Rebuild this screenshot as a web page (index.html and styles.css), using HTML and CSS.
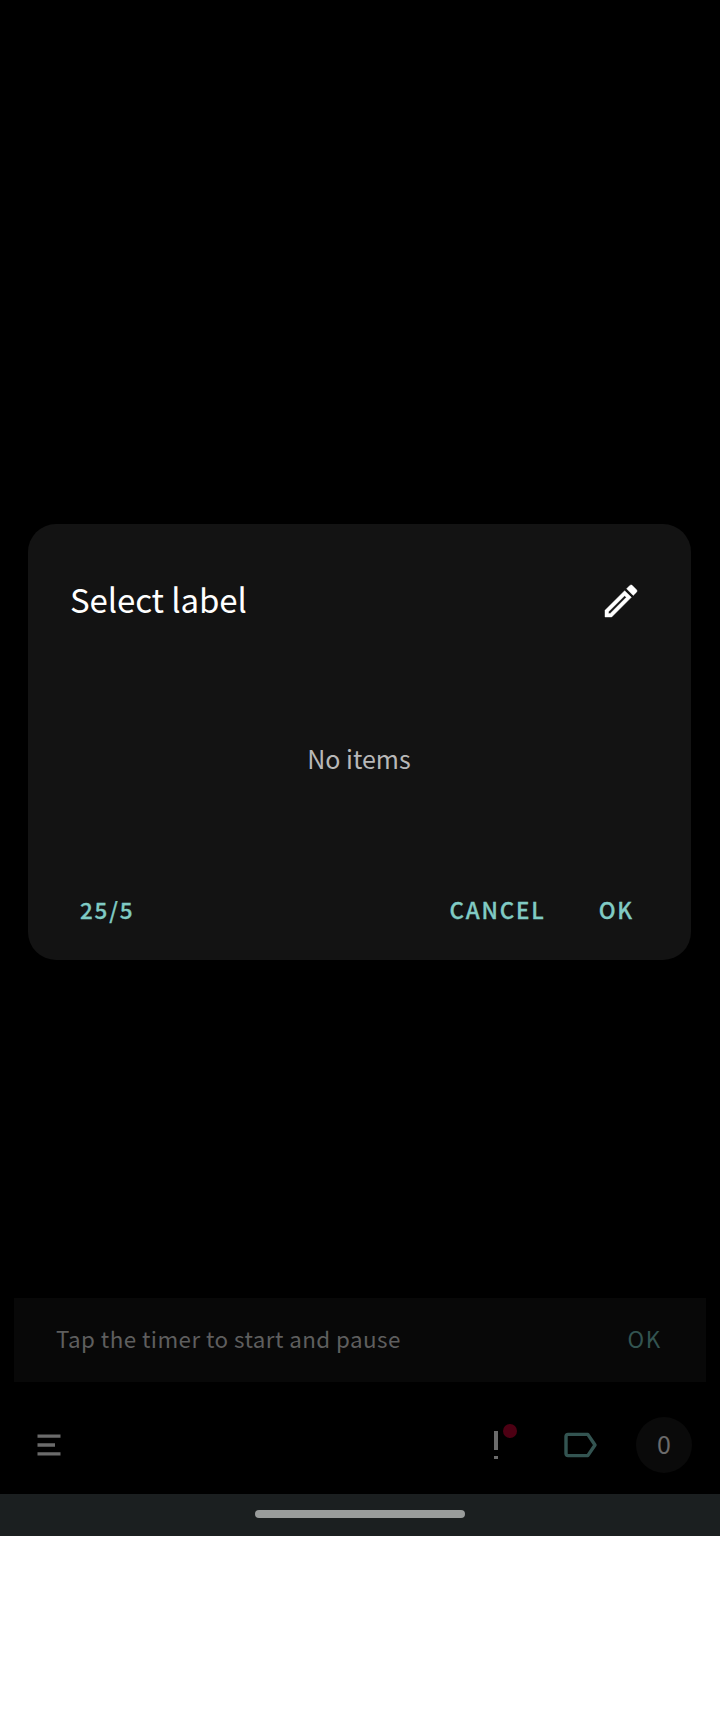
FILE: index.html
```
<!DOCTYPE html>
<html lang="en">
<head>
<meta charset="utf-8">
<title>Select label</title>
<link rel="stylesheet" href="styles.css">
</head>
<body>
<div class="screen">
  <section class="dialog">
    <header class="dialog-head">
      <h1 class="title">Select label</h1>
      <svg class="edit" viewBox="3 3 18 18"><path fill="#fff" stroke="#fff" stroke-width=".25" d="M14.060 9.020l.92.92L5.920 19H5v-.92l9.060-9.060M17.660 3c-.25 0-.51.1-.7.290l-1.830 1.830 3.750 3.750 1.830-1.830c.39-.39.39-1.020 0-1.410l-2.340-2.340c-.2-.2-.45-.29-.71-.29zm-3.600 3.190L3 17.250V21h3.750L17.810 9.940l-3.750-3.750z"/></svg>
    </header>
    <p class="empty">No items</p>
    <footer class="actions">
      <span class="profile">25/5</span>
      <span class="cancel">CANCEL</span>
      <span>OK</span>
    </footer>
  </section>
  <div class="snackbar">
    <span class="message">Tap the timer to start and pause</span>
    <span class="snack-ok">OK</span>
  </div>
  <nav class="toolbar">
    <svg class="menu" viewBox="0 0 24 22"><path fill="#6b6b6b" d="M.5.500H23.500V3.800H.5zM.5 9.200H18V12.800H.5zM.5 18.200H23.500V21.500H.5z"/></svg>
    <svg class="alert" viewBox="0 0 24 36"><path fill="#6b6b6b" d="M1 4h4v19H1zM1 29h4v3H1z"/><circle cx="17" cy="4" r="7" fill="#4d0013"/></svg>
    <svg class="tag" viewBox="0 0 34 26"><path d="M4 2.400H23.800L31 13 23.800 23.600H4Q2 23.600 2 21.600V4.400Q2 2.400 4 2.400z" fill="none" stroke="#335451" stroke-width="3.4" stroke-linejoin="round"/></svg>
    <span class="count">0</span>
  </nav>
  <div class="system"><span class="handle"></span></div>
</div>
</body>
</html>
```
FILE: styles.css
```
* { box-sizing: border-box; margin: 0; }
body { background: #fff; font-family: "Noto Sans CJK SC", sans-serif; }
svg { display: block; overflow: visible; }
.screen { display: flex; flex-direction: column; height: 1536px; padding-top: 524px; background: #000; }
.dialog { height: 436px; margin: 0 29px 0 28px; border-radius: 28px; background: #131313; display: flex; flex-direction: column; }
.dialog-head { display: flex; justify-content: space-between; align-items: center; height: 154px; padding: 0 54px 0 42px; }
.title { margin-bottom: 4px; font-size: 33px; font-weight: 400; letter-spacing: -.1px; line-height: 50px; color: #fff; }
.edit { width: 32px; height: 32px; }
.empty { height: 164px; line-height: 160px; padding-right: 1px; text-align: center; font-size: 25px; color: #b8b8b8; }
.actions { display: flex; height: 72px; align-items: center; margin-top: 31px; padding: 0 57px 0 52px; font-size: 22.4px; font-weight: 500; letter-spacing: 1.8px; line-height: 40px; color: #80cbc4; -webkit-text-stroke: .3px #80cbc4; }
.profile { margin-right: auto; }
.cancel { margin-right: 53px; }
.snackbar { height: 84px; margin: 338px 14px 0; padding: 0 44px 4px 42px; display: flex; align-items: center; justify-content: space-between; background: #080808; line-height: 40px; }
.message { font-size: 22.4px; letter-spacing: .43px; color: #5e5e5e; }
.snack-ok { font-size: 22.4px; letter-spacing: 1.7px; color: #335451; }
.toolbar { height: 112px; display: flex; align-items: center; padding: 14px 28px 0 37px; }
.menu { width: 24px; height: 22px; margin-right: auto; }
.alert { width: 24px; height: 36px; margin-right: 47px; }
.tag { width: 34px; height: 26px; margin-right: 38px; }
.count { width: 56px; height: 56px; border-radius: 50%; background: #0a0a0a; color: #6b6b6b; font-size: 25px; line-height: 53px; text-align: center; }
.system { height: 42px; display: flex; align-items: center; justify-content: center; background: #1b1f20; }
.handle { width: 210px; height: 8px; border-radius: 4px; background: #999c9b; margin-bottom: 2px; }
```
